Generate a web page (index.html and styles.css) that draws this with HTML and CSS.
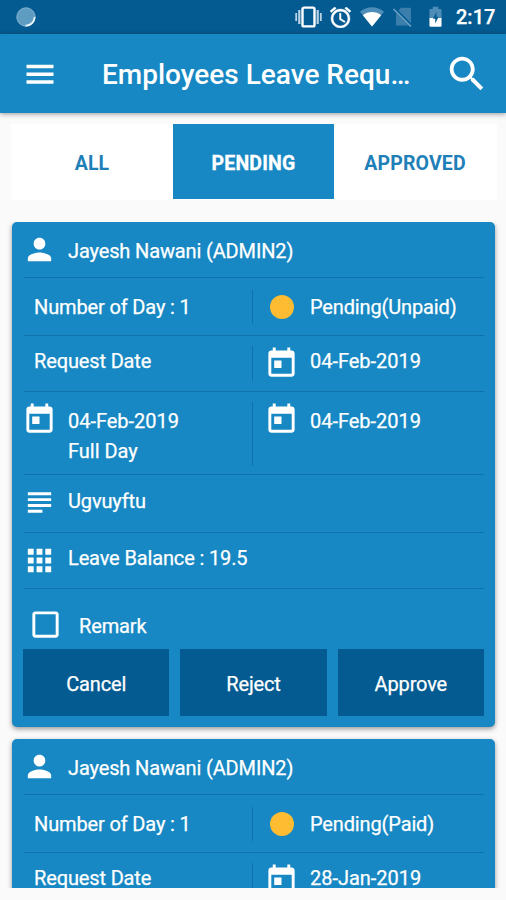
FILE: index.html
```html
<!DOCTYPE html>
<html lang="en">
<head>
<meta charset="utf-8">
<title>Employees Leave Requests</title>
<link rel="stylesheet" href="styles.css">
</head>
<body>
<svg class="defs" width="0" height="0">
  <symbol id="person" viewBox="0 0 24 24"><path d="M12 12c2.21 0 4-1.79 4-4s-1.79-4-4-4-4 1.79-4 4 1.79 4 4 4zm0 2c-2.67 0-8 1.34-8 4v2h16v-2c0-2.66-5.33-4-8-4z"/></symbol>
  <symbol id="today" viewBox="0 0 24 24"><path d="M19 3h-1V1h-2v2H8V1H6v2H5c-1.11 0-1.99.9-1.99 2L3 19c0 1.1.89 2 2 2h14c1.1 0 2-.9 2-2V5c0-1.1-.9-2-2-2zm0 16H5V8h14v11zM7 10h5v5H7z"/></symbol>
  <symbol id="subject" viewBox="0 0 24 24"><path d="M14 17H4v2h10v-2zm6-8H4v2h16V9zM4 15h16v-2H4v2zM4 5v2h16V5H4z"/></symbol>
  <symbol id="apps" viewBox="0 0 24 24"><path d="M4 8h4V4H4v4zm6 12h4v-4h-4v4zm-6 0h4v-4H4v4zm0-6h4v-4H4v4zm6 0h4v-4h-4v4zm6-10v4h4V4h-4zm-6 4h4V4h-4v4zm6 6h4v-4h-4v4zm0 6h4v-4h-4v4z"/></symbol>
  <symbol id="checkbox" viewBox="0 0 24 24"><path d="M19 5v14H5V5h14m0-2H5c-1.1 0-2 .9-2 2v14c0 1.1.9 2 2 2h14c1.1 0 2-.9 2-2V5c0-1.1-.9-2-2-2z"/></symbol>
</svg>

<div class="status">
  <svg class="spinner" viewBox="0 0 20 20"><circle cx="10" cy="10" r="9.2" fill="#5f9cc2" stroke="#86b5d2" stroke-width="1"/><path d="M18.600 10A8.700 8.700 0 0 1 9.500 18.600" fill="none" stroke="#e6f3fb" stroke-width="1.800"/></svg>
  <svg class="vibrate" viewBox="0 0 27 22"><rect x="7.5" y="1.6" width="12" height="18.8" rx="1.5" fill="none" stroke="#fff" stroke-width="2.4"/><path d="M4.3 4v14M22.7 4v14" stroke="#b9d3e5" stroke-width="2.2"/><path d="M1.2 7v8M25.8 7v8" stroke="#b9d3e5" stroke-width="1.8"/></svg>
  <svg class="alarm" viewBox="2 2 20 20"><path fill="#fff" stroke="#fff" stroke-width=".4" d="M22 5.72l-4.6-3.86-1.29 1.53 4.6 3.86L22 5.72zM7.88 3.39L6.6 1.86 2 5.71l1.29 1.53 4.59-3.85zM12.5 8H11v6l4.75 2.85.75-1.23-4-2.37V8zM12 4c-4.97 0-9 4.03-9 9s4.02 9 9 9c4.97 0 9-4.03 9-9s-4.03-9-9-9zm0 16c-3.87 0-7-3.13-7-7s3.13-7 7-7 7 3.13 7 7-3.13 7-7 7z"/></svg>
  <svg class="wifi" viewBox="0 0 24 20"><path d="M12 19.5L0 4.8C6.500-1.200 17.500-1.200 24 4.800z" fill="#4d8db7"/><path d="M12 19.500L2.800 8.300C7.800 4 16.200 4 21.200 8.300z" fill="#fff"/></svg>
  <svg class="sim" viewBox="0 0 20 20"><path d="M8 .8h8.500a1.500 1.500 0 0 1 1.500 1.500V18.500H3V6z" fill="#3b7eac"/><path d="M1 1.500L19 19.500" stroke="#045b91" stroke-width="3.200"/><path d="M.5 2L18 19.500" stroke="#73a6c8" stroke-width="1.500"/></svg>
  <svg class="battery" viewBox="0 0 14 22"><path d="M4 0h6v2.500h2.500q1 0 1 1V12H.5V3.500q0-1 1-1H4z" fill="#4d8db7"/><path d="M.5 12h13v8.500q0 1-1 1h-11q-1 0-1-1z" fill="#fff"/><path d="M8 5.500L4.300 13h2.400v5l3.700-7.200H8z" fill="#045b91"/></svg>
  <span class="clock">2:17</span>
</div>

<header class="toolbar">
  <svg class="menu" viewBox="0 0 24 24"><path d="M3 18.500h18v-2.300H3v2.300zm0-5.200h18v-2.300H3v2.300zm0-7.500v2.300h18V5.800H3z"/></svg>
  <h1 class="title">Employees Leave Requ…</h1>
  <svg class="search" viewBox="0 0 24 24"><path d="M15.500 14h-.79l-.28-.27C15.410 12.590 16 11.110 16 9.500 16 5.910 13.090 3 9.500 3S3 5.910 3 9.500 5.910 16 9.500 16c1.610 0 3.090-.59 4.230-1.570l.27.28v.79l5 4.990L20.490 19l-4.990-5zm-6 0C7.010 14 5 11.990 5 9.500S7.010 5 9.500 5 14 7.010 14 9.500 11.990 14 9.500 14z"/></svg>
</header>

<nav class="tabs">
  <span class="tab">ALL</span>
  <span class="tab active">PENDING</span>
  <span class="tab">APPROVED</span>
</nav>

<main class="list">
  <section class="card">
    <div class="row name"><svg class="icon"><use href="#person"/></svg><span class="text">Jayesh Nawani (ADMIN2)</span></div>
    <div class="row split days">
      <div class="cell plain"><span class="text">Number of Day : 1</span></div>
      <div class="cell"><span class="dot"></span><span class="text">Pending(Unpaid)</span></div>
    </div>
    <div class="row split requested">
      <div class="cell plain"><span class="text">Request Date</span></div>
      <div class="cell"><svg class="icon"><use href="#today"/></svg><span class="text date">04-Feb-2019</span></div>
    </div>
    <div class="row split range">
      <div class="cell"><svg class="icon"><use href="#today"/></svg><span class="text date">04-Feb-2019<br>Full Day</span></div>
      <div class="cell"><svg class="icon"><use href="#today"/></svg><span class="text date">04-Feb-2019</span></div>
    </div>
    <div class="row reason"><svg class="icon"><use href="#subject"/></svg><span class="text">Ugvuyftu</span></div>
    <div class="row balance"><svg class="icon"><use href="#apps"/></svg><span class="text">Leave Balance : 19.5</span></div>
    <div class="remark"><svg class="icon"><use href="#checkbox"/></svg><span class="text">Remark</span></div>
    <div class="actions">
      <span class="button cancel">Cancel</span>
      <span class="button reject">Reject</span>
      <span class="button approve">Approve</span>
    </div>
  </section>

  <section class="card">
    <div class="row name"><svg class="icon"><use href="#person"/></svg><span class="text">Jayesh Nawani (ADMIN2)</span></div>
    <div class="row split days">
      <div class="cell plain"><span class="text">Number of Day : 1</span></div>
      <div class="cell"><span class="dot"></span><span class="text">Pending(Paid)</span></div>
    </div>
    <div class="row split requested">
      <div class="cell plain"><span class="text">Request Date</span></div>
      <div class="cell"><svg class="icon"><use href="#today"/></svg><span class="text date">28-Jan-2019</span></div>
    </div>
  </section>
</main>
</body>
</html>
```
FILE: styles.css
```css
* { box-sizing: border-box; }

body {
  margin: 0;
  height: 900px;
  overflow: hidden;
  background: #fafafa;
  font-family: Roboto, "Liberation Sans", sans-serif;
  color: #fff;
  display: flex;
  flex-direction: column;
}

svg { display: block; flex: none; fill: #fff; }
.defs { position: absolute; }

.status {
  height: 34px;
  flex: none;
  background: #045b91;
  display: flex;
  align-items: center;
  padding: 0 11px 0 16px;
}
.spinner { width: 20px; height: 20px; margin-right: auto; }
.vibrate { width: 27px; height: 22px; margin-right: 8px; }
.alarm { width: 21px; height: 21px; margin-right: 9px; }
.wifi { width: 24px; height: 20px; margin-right: 9px; }
.sim { width: 20px; height: 20px; margin-right: 16px; }
.battery { width: 13px; height: 22px; margin-right: 14px; }
.clock { font-size: 20px; font-weight: 500; line-height: 36px; width: 39px; white-space: nowrap; -webkit-text-stroke: .25px #fff; }

.toolbar {
  height: 79px;
  flex: none;
  background: #1788c3;
  display: flex;
  align-items: center;
  padding: 0 16px 0 22px;
  box-shadow: 0 1px 5px rgba(0, 0, 0, .4);
  z-index: 1;
}
.menu { width: 36px; height: 36px; }
.title {
  margin: 3px 0 0 44px;
  width: 343px;
  font-size: 28px;
  font-weight: 500;
  line-height: 36px;
  white-space: nowrap;
}
.search { width: 46px; height: 46px; }

.tabs {
  display: grid;
  grid-template-columns: 162px 161px 162px;
  height: 76px;
  margin: 11px 9px 22px 11px;
  flex: none;
  background: #fff;
}
.tab {
  height: 75px;
  line-height: 79px;
  text-align: center;
  font-size: 19.5px;
  font-weight: 700;
  letter-spacing: .15px;
  color: #1f7fb8;
}
.tab.active { background: #1788c3; color: #fff; -webkit-text-stroke: .3px #fff; }

.list {
  height: 666px;
  flex: none;
  padding: 0 11px 0 12px;
  overflow: hidden;
  display: flex;
  flex-direction: column;
  gap: 12px;
}
.card {
  flex: none;
  background: #1788c3;
  border-radius: 5px;
  padding: 0 11px 11px 12px;
  box-shadow: 0 2px 5px rgba(0, 0, 0, .4);
}
.row {
  display: flex;
  align-items: flex-start;
  border-bottom: 1px solid #1072aa;
}
.icon { width: 35px; height: 35px; margin: 0 11px 0 -2px; }
.text {
  font-size: 20px;
  letter-spacing: -.14px;
  line-height: 30px;
  white-space: nowrap;
  -webkit-text-stroke: .25px #fff;
}
.date { letter-spacing: -.02px; }

.name { height: 56px; padding-top: 10px; }
.name .text { margin-top: 4px; }

.split { display: grid; grid-template-columns: 228px 232px; align-items: stretch; }
.cell { display: flex; align-items: flex-start; }
.cell + .cell { border-left: 1px solid #1072aa; padding-left: 13px; }
.plain { padding-left: 10px; }

.days { height: 58px; padding: 12px 0 11px; }
.days .text { margin-top: 2px; }
.dot { width: 24px; height: 24px; border-radius: 50%; background: #fdbc31; margin: 5px 16px 0 4px; }

.requested { height: 56px; padding: 10px 0; }

.range { height: 83px; padding: 10px 0; }
.range .text { margin-top: 4px; }

.reason { height: 58px; padding-top: 10px; }
.reason .text { margin-top: 1px; }
.balance { height: 56px; padding-top: 10px; }

.remark { height: 60px; display: flex; padding: 18px 0 0 6px; }
.remark .icon { margin-right: 16px; }
.remark .text { margin-top: 4px; }

.actions { display: grid; grid-template-columns: repeat(3, 1fr); gap: 11px; margin-left: -1px; }
.button {
  height: 67px;
  line-height: 70px;
  text-align: center;
  background: #045b91;
  font-size: 20px;
  letter-spacing: -.14px;
  -webkit-text-stroke: .25px #fff;
}
```
